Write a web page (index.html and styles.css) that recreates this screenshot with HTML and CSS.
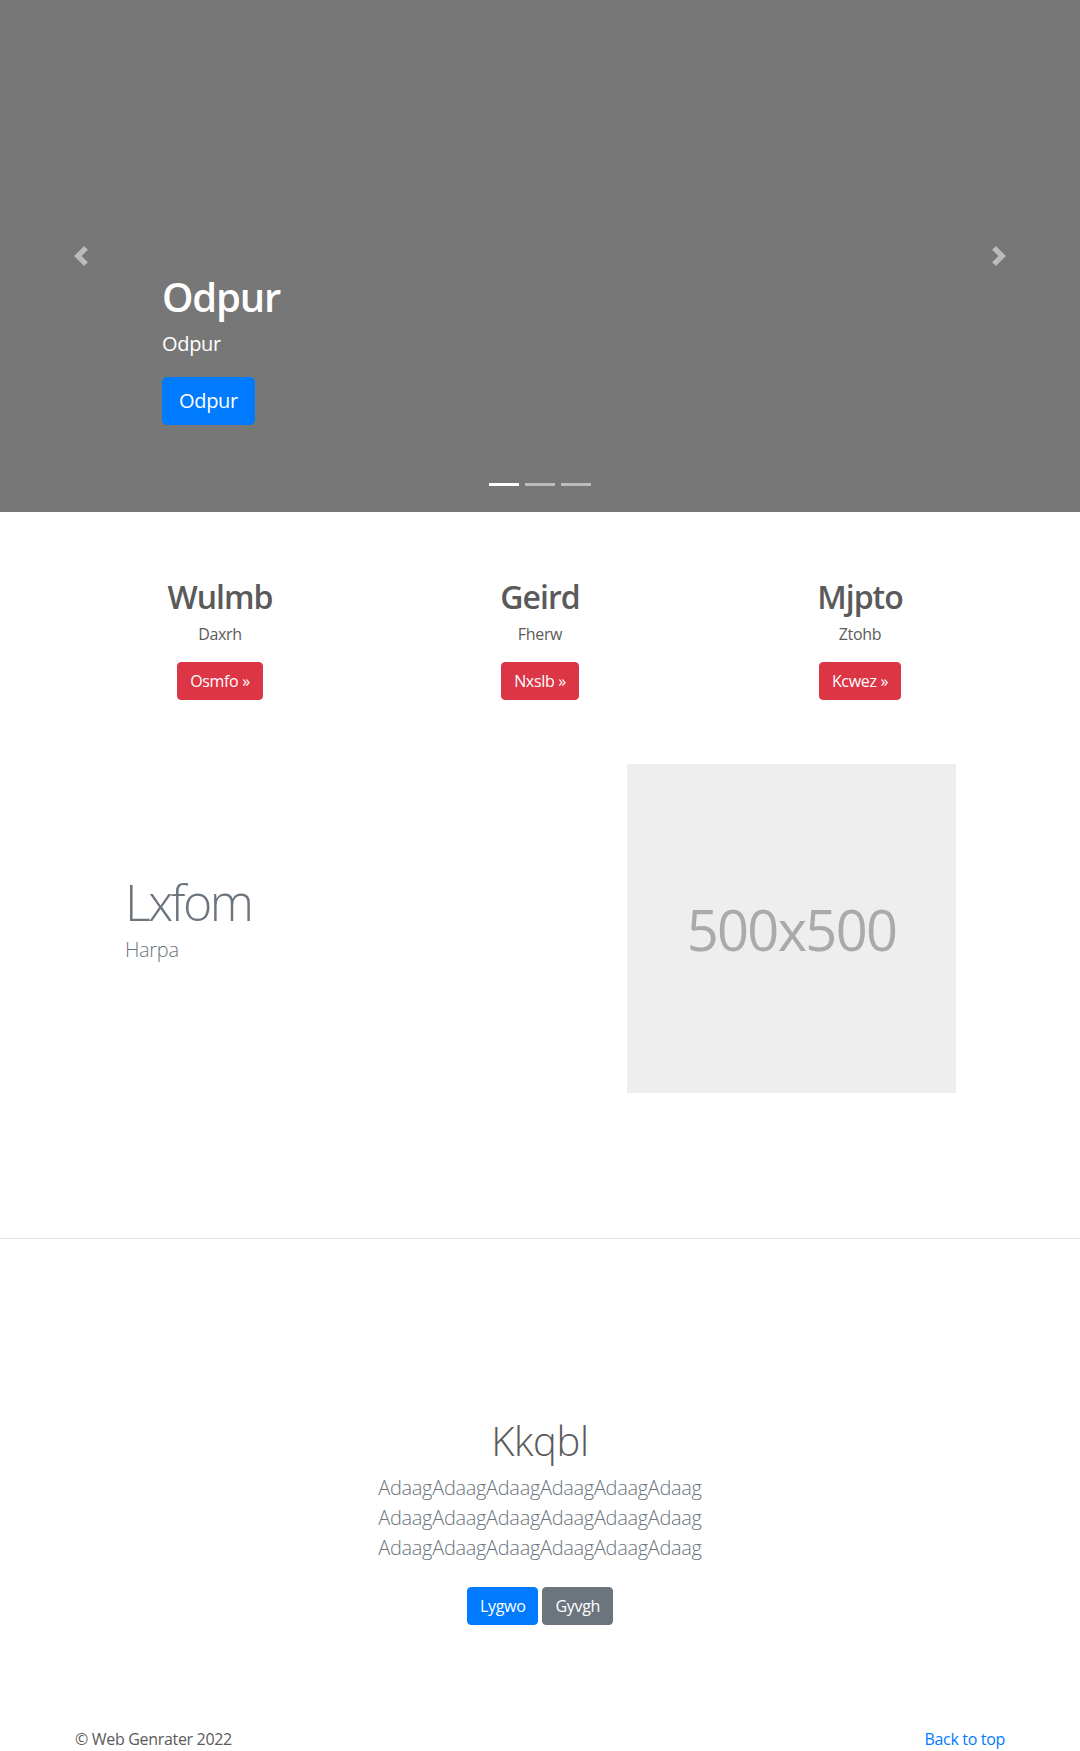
FILE: index.html
```html
<!DOCTYPE html>
<html lang="en">
<head>
<meta charset="utf-8">
<title>Carousel</title>
<link rel="stylesheet" href="styles.css">
</head>
<body>
<main>
  <div class="carousel">
    <div class="carousel-caption">
      <h1 class="caption-title">Odpur</h1>
      <p class="caption-text">Odpur</p>
      <div class="caption-action"><a class="btn btn-lg btn-primary" href="#">Odpur</a></div>
    </div>
    <a class="carousel-control prev" href="#" aria-label="Previous">
      <svg viewBox="0 0 8 8" width="20" height="20"><path fill="#fff" d="M5.25 0l-4 4 4 4 1.5-1.5L4.25 4l2.5-2.5L5.25 0z"/></svg>
    </a>
    <a class="carousel-control next" href="#" aria-label="Next">
      <svg viewBox="0 0 8 8" width="20" height="20"><path fill="#fff" d="M2.75 0l-1.5 1.5L3.75 4l-2.5 2.5L2.75 8l4-4-4-4z"/></svg>
    </a>
    <ol class="carousel-indicators">
      <li class="active"></li>
      <li></li>
      <li></li>
    </ol>
  </div>

  <div class="container marketing">
    <div class="marketing-row">
      <div class="feature">
        <h2>Wulmb</h2>
        <p>Daxrh</p>
        <p><a class="btn btn-danger" href="#">Osmfo &raquo;</a></p>
      </div>
      <div class="feature">
        <h2>Geird</h2>
        <p>Fherw</p>
        <p><a class="btn btn-danger" href="#">Nxslb &raquo;</a></p>
      </div>
      <div class="feature">
        <h2>Mjpto</h2>
        <p>Ztohb</p>
        <p><a class="btn btn-danger" href="#">Kcwez &raquo;</a></p>
      </div>
    </div>

    <div class="featurette">
      <div class="featurette-text">
        <h2 class="featurette-heading">Lxfom</h2>
        <p class="lead muted">Harpa</p>
      </div>
      <div class="featurette-image">500x500</div>
    </div>
  </div>

  <hr class="divider">

  <section class="jumbotron">
    <div class="jumbo-container">
      <h1 class="jumbotron-heading">Kkqbl</h1>
      <p class="lead muted">AdaagAdaagAdaagAdaagAdaagAdaag AdaagAdaagAdaagAdaagAdaagAdaag AdaagAdaagAdaagAdaagAdaagAdaag</p>
      <div class="jumbo-actions">
        <a class="btn btn-primary" href="#">Lygwo</a>
        <a class="btn btn-secondary" href="#">Gyvgh</a>
      </div>
    </div>
  </section>

  <footer class="container footer">
    <p>&copy; Web Genrater 2022</p>
    <p><a href="#">Back to top</a></p>
  </footer>
</main>
</body>
</html>
```

FILE: styles.css
```css
* {
  box-sizing: border-box;
}

body {
  margin: 0;
  padding-bottom: 48px;
  font-family: "Open Sans", "Noto Sans", sans-serif;
  font-size: 16px;
  line-height: 1.5;
  letter-spacing: -0.02em;
  color: #5a5a5a;
  background: #fff;
}

a {
  color: #007bff;
  text-decoration: none;
}

/* Carousel */
.carousel {
  position: relative;
  height: 512px;
  margin-bottom: 64px;
  background: #777;
}

.carousel-caption {
  position: absolute;
  left: 15%;
  right: 15%;
  bottom: 87px;
  z-index: 10;
  color: #fff;
}

.caption-title {
  margin: 0 0 8px;
  font-size: 40px;
  font-weight: 600;
  line-height: 1.2;
  letter-spacing: -0.03em;
}

.caption-text {
  margin: 0 0 18px;
  font-size: 20px;
  line-height: 1.5;
}

.caption-action {
  display: flex;
}

.carousel-control {
  position: absolute;
  top: 0;
  bottom: 0;
  width: 15%;
  display: flex;
  align-items: center;
  justify-content: center;
  opacity: 0.5;
}

.carousel-control.prev {
  left: 0;
}

.carousel-control.next {
  right: 0;
}

.carousel-control svg {
  display: block;
  width: 20px;
  height: 20px;
}

.carousel-indicators {
  position: absolute;
  left: 0;
  right: 0;
  bottom: 0;
  margin: 0 0 16px;
  padding: 0;
  list-style: none;
  display: flex;
  justify-content: center;
}

.carousel-indicators li {
  width: 30px;
  height: 3px;
  margin: 10px 3px;
  background: #fff;
  opacity: 0.5;
}

.carousel-indicators li.active {
  opacity: 1;
}

/* Buttons */
.btn {
  display: inline-block;
  padding: 6px 12px;
  font-size: 16px;
  line-height: 1.5;
  border: 1px solid transparent;
  border-radius: 4px;
  color: #fff;
  text-align: center;
}

.btn-lg {
  padding: 8px 16px;
  font-size: 20px;
  line-height: 1.5;
  border-radius: 5px;
}

.btn-primary {
  background: #007bff;
  border-color: #007bff;
}

.btn-secondary {
  background: #6c757d;
  border-color: #6c757d;
}

.btn-danger {
  background: #dc3545;
  border-color: #dc3545;
}

/* Layout */
.container {
  width: 960px;
  margin: 0 auto;
  padding: 0 15px;
}

.marketing-row {
  display: grid;
  grid-template-columns: repeat(3, 1fr);
  margin: 0 -15px;
}

.feature {
  padding: 0 15px;
  margin-bottom: 24px;
  text-align: center;
}

.feature h2 {
  margin: 2px 0 6px;
  font-size: 32px;
  font-weight: 600;
  line-height: 1.2;
  letter-spacing: -0.03em;
}

.feature p {
  margin: 0 12px 16px;
}

/* Featurette */
.featurette {
  display: flex;
  align-items: center;
  margin-top: 24px;
  padding: 0 49px 0 50px;
}

.featurette-text {
  flex: 1;
}

.featurette-heading {
  margin: 0 0 8px;
  font-size: 50px;
  font-weight: 300;
  line-height: 1;
  letter-spacing: -0.05em;
  color: #6c757d;
}

.lead {
  font-size: 20px;
  font-weight: 300;
  line-height: 1.5;
}

.featurette .lead {
  margin: 0 0 16px;
}

.muted {
  color: #6c757d;
}

.featurette-image {
  width: 329px;
  height: 329px;
  display: flex;
  align-items: center;
  justify-content: center;
  background: #eee;
  color: #aaa;
  font-size: 56px;
  line-height: 1;
  letter-spacing: -0.03em;
}

.divider {
  margin: 145px 0 0;
  border: 0;
  border-top: 1px solid rgba(0, 0, 0, 0.1);
  height: 0;
}

/* Jumbotron */
.jumbotron {
  padding: 178px 0 48px;
  text-align: center;
}

.jumbo-container {
  max-width: 640px;
  margin: 0 auto;
  padding: 0 15px;
}

.jumbotron-heading {
  margin: 0 0 8px;
  font-size: 40px;
  font-weight: 300;
  line-height: 1.2;
}

.jumbotron .lead {
  margin: 0 0 16px;
}

.jumbo-actions {
  display: flex;
  justify-content: center;
  gap: 4px;
  padding: 8px 0;
}

/* Footer */
.footer {
  display: flex;
  justify-content: space-between;
  padding-top: 46px;
}

.footer p {
  margin: 0 0 16px;
}
```
